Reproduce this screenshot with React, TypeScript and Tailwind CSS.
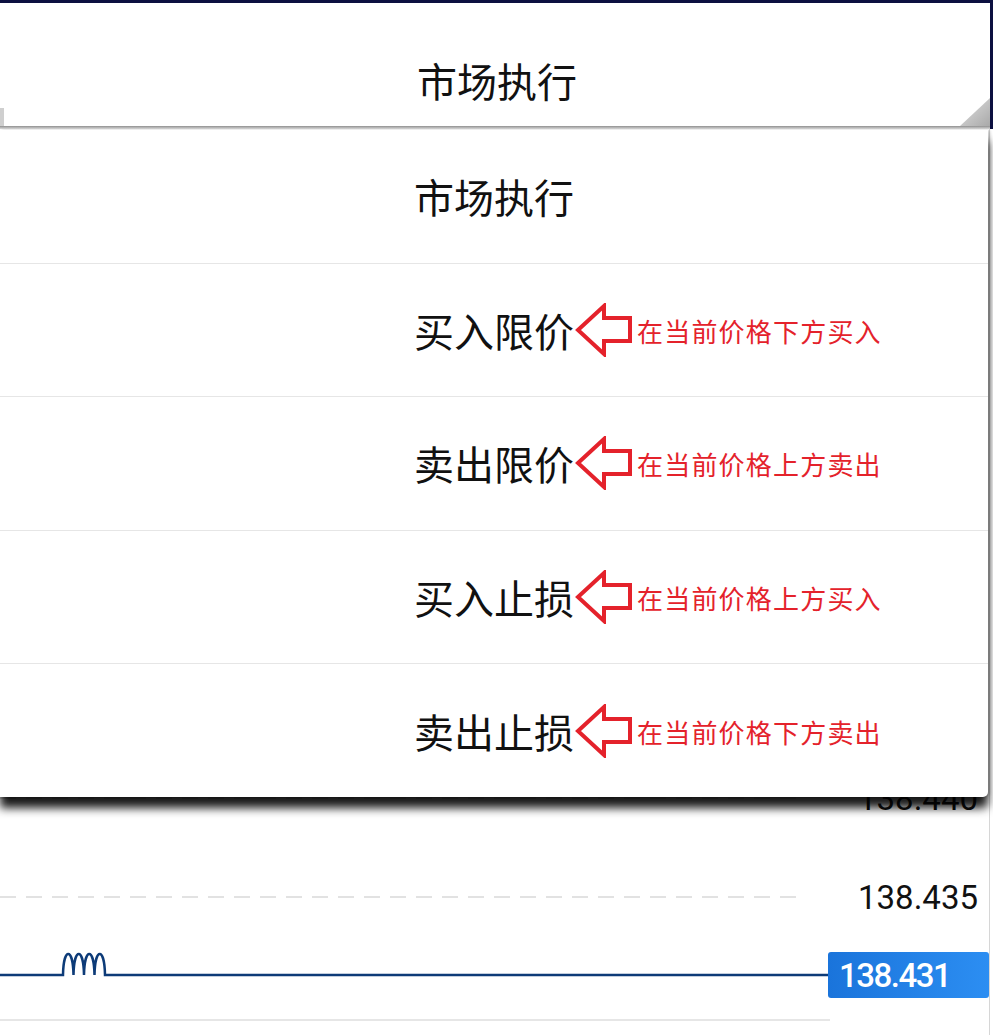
import React from 'react';

const CJK = '"Noto Sans CJK SC", "Noto Sans", sans-serif';

interface OrderOption {
  label: string;
  note?: string;
}

const options: OrderOption[] = [
  { label: '市场执行' },
  { label: '买入限价', note: '在当前价格下方买入' },
  { label: '卖出限价', note: '在当前价格上方卖出' },
  { label: '买入止损', note: '在当前价格上方买入' },
  { label: '卖出止损', note: '在当前价格下方卖出' },
];

const OutlineArrow: React.FC = () => (
  <svg width="58" height="54" viewBox="0 0 58 54" className="shrink-0">
    <path
      d="M3 27 L29 3 L29 15 L55 15 L55 38 L29 38 L29 51 Z"
      fill="white"
      stroke="#e4222b"
      strokeWidth="4"
      strokeLinejoin="miter"
    />
  </svg>
);

const PriceRow: React.FC<{ price: string }> = ({ price }) => (
  <div className="h-[46px] flex items-center">
    <div className="w-[800px] h-[2px] bg-[repeating-linear-gradient(90deg,#e2e2e2_0_16px,transparent_16px_26px)]"></div>
    <div
      className="flex-1 text-right pr-[11px] text-[33px] text-[#111] leading-none"
      style={{ fontFamily: 'Roboto, "Noto Sans", sans-serif' }}
    >
      {price}
    </div>
  </div>
);

const App: React.FC = () => {
  // little burst of ticks in the price line
  let wiggle = 'M0 23 H63';
  for (let i = 0; i < 4; i++) {
    const x0 = 63 + i * 10.5;
    wiggle += ` C${x0 + 0.5} -5, ${x0 + 10} -5, ${x0 + 10.5} 23`;
  }
  wiggle += ' H828';

  return (
    <div
      className="relative w-[993px] h-[1035px] overflow-hidden bg-white flex flex-col"
      style={{ fontFamily: CJK }}
    >
      {/* Spinner header */}
      <div className="relative shrink-0 border-t-[3px] border-r-[3px] border-[#0c1040]">
        <div className="h-[123px] flex items-center justify-center pt-[31px] pl-[4px]">
          <span className="text-[40px] text-[#111] leading-none">市场执行</span>
        </div>
        <div className="h-[3px] bg-gradient-to-b from-[#8f8f8f] to-[#dedede]"></div>
        <div className="absolute left-0 bottom-[3px] w-[4px] h-[18px] bg-[#cfcfcf]"></div>
        <svg className="absolute right-0 bottom-[3px]" width="30" height="28" viewBox="0 0 30 28">
          <defs>
            <linearGradient id="tri" x1="0" y1="0" x2="1" y2="1">
              <stop offset="0" stopColor="#e2e2e2" />
              <stop offset="1" stopColor="#a9a9a9" />
            </linearGradient>
          </defs>
          <path d="M30 0 L30 28 L0 28 Z" fill="url(#tri)" />
        </svg>
      </div>

      {/* Chart behind the dropdown */}
      <div className="flex-1 flex flex-col mr-[3px] border-r border-[#d6d6d6]">
        <div className="h-[646px] shrink-0"></div>
        <PriceRow price="138.440" />
        <div className="h-[53px] shrink-0"></div>
        <PriceRow price="138.435" />
        <div className="h-[32px] shrink-0"></div>
        <div className="h-[46px] flex items-center">
          <svg width="828" height="46" viewBox="0 0 828 46" className="shrink-0 overflow-visible">
            <path d={wiggle} fill="none" stroke="#0d3b78" strokeWidth="2.5" />
          </svg>
          <div
            className="w-[161px] h-[46px] rounded-[3px] bg-gradient-to-r from-[#1a74db] to-[#2c8ef2] flex items-center pl-[11px] text-white text-[33px] leading-none font-medium tracking-[-1.5px]"
            style={{ fontFamily: 'Roboto, "Noto Sans", sans-serif' }}
          >
            138.431
          </div>
        </div>
        <div className="h-[21px] shrink-0"></div>
        <div className="w-[830px] h-[2px] bg-[#e6e6e6]"></div>
      </div>

      {/* Dropdown list */}
      <div className="absolute left-0 top-[130px] w-[988px] h-[667px] bg-white rounded-br-[5px] flex flex-col shadow-[0_11px_10px_rgba(0,0,0,0.9),2px_0_3px_rgba(0,0,0,0.2)]">
        {options.map((opt, i) => (
          <div
            key={opt.label}
            className={`relative flex-1 flex items-center justify-center ${i > 0 ? 'border-t border-[#e6e6e6]' : ''}`}
          >
            <span className="text-[40px] text-[#111] leading-none">{opt.label}</span>
            {opt.note && (
              <div className="absolute left-[575px] top-1/2 -translate-y-1/2 flex items-center gap-[4px]">
                <OutlineArrow />
                <span className="text-[26px] text-[#e4222b] leading-none tracking-[1.2px] pt-[2px]">{opt.note}</span>
              </div>
            )}
          </div>
        ))}
      </div>
    </div>
  );
};

export default App;
